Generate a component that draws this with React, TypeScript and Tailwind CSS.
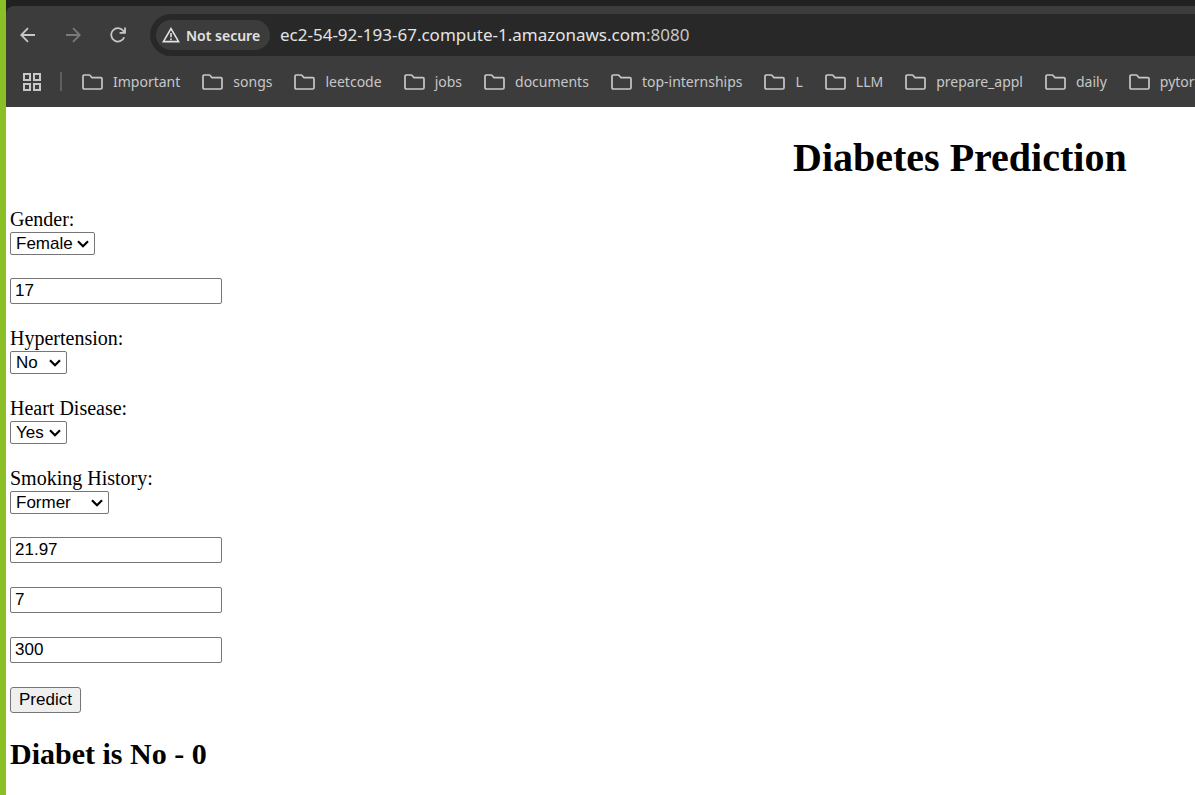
import React from "react";

const bookmarks = [
  "Important",
  "songs",
  "leetcode",
  "jobs",
  "documents",
  "top-internships",
  "L",
  "LLM",
  "prepare_appl",
  "daily",
  "pytor",
];

function BackIcon() {
  return (
    <svg width="16" height="16" viewBox="0 0 16 16" fill="none" stroke="currentColor" strokeWidth="1.8">
      <path d="M15 8H1.8M8 1.2 1.2 8 8 14.8" />
    </svg>
  );
}

function ForwardIcon() {
  return (
    <svg width="16" height="16" viewBox="0 0 16 16" fill="none" stroke="currentColor" strokeWidth="1.8">
      <path d="M1 8h13.2M8 1.2 14.8 8 8 14.8" />
    </svg>
  );
}

function ReloadIcon() {
  return (
    <svg width="16" height="16" viewBox="0 0 16 16" fill="none" stroke="currentColor" strokeWidth="1.8">
      <path d="M14.2 10.2A6.7 6.7 0 1 1 13.4 4l1 1.6" />
      <path d="M15 .6v5.2H9.6" />
    </svg>
  );
}

function WarningIcon() {
  return (
    <svg width="18" height="16" viewBox="0 0 18 16" fill="none" stroke="currentColor" strokeWidth="1.6">
      <path d="M9 1.6 16.6 14.6H1.4Z" />
      <path d="M9 6v4.2M9 11.4v1.8" />
    </svg>
  );
}

function AppsIcon() {
  return (
    <svg width="18" height="18" viewBox="0 0 18 18" fill="none" stroke="currentColor" strokeWidth="2">
      <path d="M1 1h6v6H1zM11 1h6v6h-6zM1 11h6v6H1zM11 11h6v6h-6z" />
    </svg>
  );
}

function FolderIcon() {
  return (
    <svg className="shrink-0" width="21" height="16" viewBox="0 0 21 16" fill="none" stroke="currentColor" strokeWidth="1.7" strokeLinejoin="round">
      <path d="M2.2 1H7.6L10 3.6h8.8q1.2 0 1.2 1.2v9q0 1.2-1.2 1.2H2.2Q1 15 1 13.8V2.2Q1 1 2.2 1Z" />
    </svg>
  );
}

function SelectField({ id, label, options, value, width }: { id: string; label: string; options: string[]; value: string; width: string }) {
  return (
    <div className="flex flex-col items-start">
      <label htmlFor={id} className="pb-[2px] text-[20px] leading-[22px]">
        {label}
      </label>
      <div className={`relative ${width}`}>
        <select
          id={id}
          defaultValue={value}
          className="block h-[23px] w-full appearance-none rounded-[2px] border border-[#767676] bg-white pl-[5px] font-['Liberation_Sans',Arial,sans-serif] text-[17px] leading-5"
        >
          {options.map((option) => (
            <option key={option}>{option}</option>
          ))}
        </select>
        <svg className="pointer-events-none absolute top-2 right-[6px]" width="12" height="8" viewBox="0 0 12 8" fill="none" stroke="#000" strokeWidth="2.2">
          <path d="M1 1.2 6 6.2l5-5" />
        </svg>
      </div>
    </div>
  );
}

function NumberField({ label, value }: { label: string; value: string }) {
  return (
    <input
      type="text"
      aria-label={label}
      defaultValue={value}
      className="block h-[26px] w-[212px] rounded-[2px] border border-[#767676] bg-white px-1 font-['Liberation_Sans',Arial,sans-serif] text-[17px] leading-5"
    />
  );
}

function BrowserBar() {
  return (
    <header className="overflow-hidden bg-[#202221] pt-[6px] font-['Noto_Sans','Open_Sans',sans-serif]">
      <div className="rounded-tl-lg bg-[#3c3c3c] pt-2">
        <div className="flex h-[42px] items-center text-[#c7c7c7]">
          <div className="flex w-36 shrink-0 items-center gap-[29px] pl-[14px]">
            <button type="button" aria-label="Back">
              <BackIcon />
            </button>
            <button type="button" aria-label="Forward" className="text-[#7a7a7a]">
              <ForwardIcon />
            </button>
            <button type="button" aria-label="Reload">
              <ReloadIcon />
            </button>
          </div>
          <div className="flex h-full grow items-center gap-[10px] rounded-l-full bg-[#282828] pl-[6px]">
            <button type="button" className="flex h-[30px] w-[114px] shrink-0 items-center gap-[6px] rounded-full bg-[#3c3c3c] pl-[6px] text-[14px] font-semibold whitespace-nowrap text-[#e3e3e3]">
              <WarningIcon />
              Not secure
            </button>
            <div className="text-[17px] whitespace-nowrap text-[#e3e3e3]">
              ec2-54-92-193-67.compute-1.amazonaws.com<span className="text-[#c7c7c7]">:8080</span>
            </div>
          </div>
        </div>
        <nav aria-label="Bookmarks" className="flex h-[51px] items-center pl-[17px] text-[14px] text-[#c7c7c7]">
          <button type="button" aria-label="Apps">
            <AppsIcon />
          </button>
          <div className="mr-5 ml-[19px] h-[19px] w-[2px] shrink-0 bg-[#5f5f5f]" />
          <div className="flex gap-[22px]">
            {bookmarks.map((name) => (
              <a key={name} href="#" className="flex items-center gap-[10px] whitespace-nowrap">
                <FolderIcon />
                {name}
              </a>
            ))}
          </div>
        </nav>
      </div>
    </header>
  );
}

export default function App() {
  return (
    <div className="min-h-screen overflow-hidden border-l-[6px] border-[#8bbf26] bg-white text-black">
      <BrowserBar />
      <main className="px-1 pt-7 font-['Liberation_Serif','Times_New_Roman',serif]">
        <h1 className="ml-[783px] text-[40px] leading-[46px] font-bold whitespace-nowrap">Diabetes Prediction</h1>
        <form className="mt-[27px] flex flex-col items-start gap-[23px]" onSubmit={(event) => event.preventDefault()}>
          <SelectField id="gender" label="Gender:" options={["Female", "Male"]} value="Female" width="w-[85px]" />
          <NumberField label="Age" value="17" />
          <SelectField id="hypertension" label="Hypertension:" options={["No", "Yes"]} value="No" width="w-[57px]" />
          <SelectField id="heart" label="Heart Disease:" options={["No", "Yes"]} value="Yes" width="w-[57px]" />
          <SelectField id="smoking" label="Smoking History:" options={["Never", "Former", "Current"]} value="Former" width="w-[99px]" />
          <div className="flex flex-col items-start gap-6">
            <NumberField label="BMI" value="21.97" />
            <NumberField label="HbA1c level" value="7" />
            <NumberField label="Blood glucose level" value="300" />
            <button type="submit" className="h-[26px] w-[71px] rounded-[3px] border border-[#767676] bg-[#efefef] font-['Liberation_Sans',Arial,sans-serif] text-[17px] leading-5">
              Predict
            </button>
          </div>
        </form>
        <h2 className="mt-6 text-[30px] leading-[34px] font-bold">Diabet is No - 0</h2>
      </main>
    </div>
  );
}
